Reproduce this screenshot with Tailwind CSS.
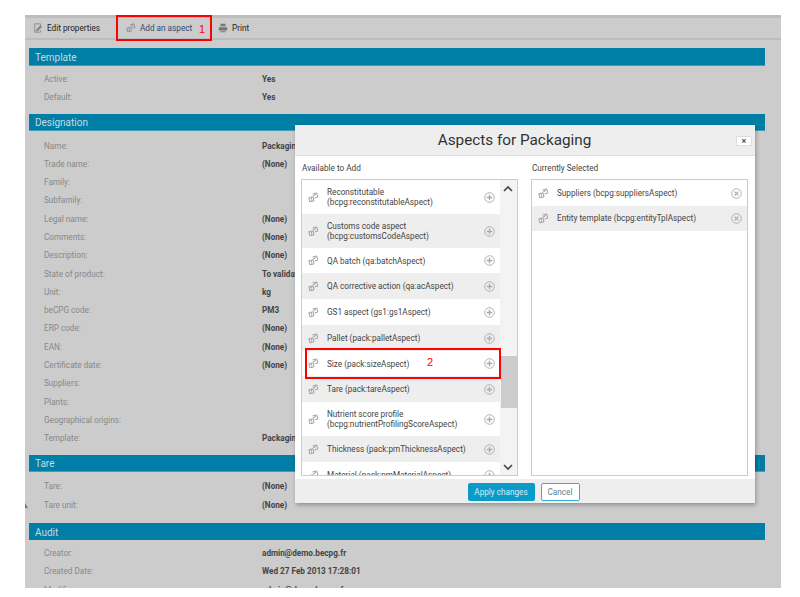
<!doctype html>
<html lang="en">
  <head>
    <meta charset="UTF-8" />
    <script src="https://cdn.jsdelivr.net/npm/@tailwindcss/browser@4"></script>
    <title>Aspects for Packaging</title>
  </head>
  <body class="bg-white font-['Roboto',sans-serif]">
    <svg class="hidden">
      <symbol id="aspect" viewBox="0 0 12 12" fill="none" stroke="currentColor" stroke-width="1">
        <path d="M1 6.200l4.500-1 1 4.500-4.500 1z" />
        <path d="M5 2.200l4.500-1.200 1.200 4.500-3.500 1" />
        <path d="M5.500 4.200l2-.5" />
        <path d="M3 7.200l1.200-.3M3.400 9l1.200-.3M7.200 3l1.300-.3" stroke-width="1.300" />
      </symbol>
      <symbol id="plus" viewBox="0 0 12 12" fill="none" stroke="currentColor">
        <circle cx="6" cy="6" r="5.200" stroke-width="1" />
        <path d="M6 3v6M3 6h6" stroke-width="1.500" />
      </symbol>
      <symbol id="cross" viewBox="0 0 12 12" fill="none" stroke="currentColor">
        <circle cx="6" cy="6" r="5.200" stroke-width="1" />
        <path d="M4 4l4 4M8 4l-4 4" stroke-width="1.400" />
      </symbol>
    </svg>

    <div class="h-[15px]"></div>
    <div class="relative ml-[25px] h-[573px] w-[756px] overflow-hidden bg-[#cccccc]">
      <!-- toolbar -->
      <div class="flex h-[25px] items-center border-t-[3px] border-b-2 border-[#bdbdbd] pt-px text-[8.2px] text-[#222222]">
        <span class="ml-[8px] flex w-[93px] items-center">
          <svg class="mr-[4px] h-[10px] w-[10px] text-[#888888]" viewBox="0 0 12 12" fill="none" stroke="currentColor"><path d="M2 1h7v3M2 1v10h7V9" /><path d="M4 8l5-5 1.500 1.500-5 5H4z" fill="currentColor" /></svg>
          Edit properties
        </span>
        <span class="flex w-[92px] items-center text-[#2f4a70]">
          <svg class="mr-[4px] h-[10px] w-[10px] text-[#888888]"><use href="#aspect" /></svg>
          Add an aspect
        </span>
        <span class="flex items-center">
          <svg class="mr-[4px] h-[10px] w-[10px] text-[#777777]" viewBox="0 0 12 12" fill="currentColor"><path d="M3 1h6v3H3zM1 5h10v4H1zM3 10h6v1H3z" /></svg>
          Print
        </span>
      </div>

      <!-- form -->
      <div class="mx-[4px] w-[736px] text-[8.2px]">
        <h2 class="mt-[8px] flex h-[18px] items-center border-b border-[#3f9fb8] bg-[#007ea6] pt-px pl-[6px] text-[10px] text-[#c9d9df]">Template</h2>
        <div class="mt-[4px] grid grid-cols-[218px_1fr] pl-[15px] leading-[18.4px]">
          <span class="text-[#888888]">Active:</span><b class="font-bold text-[#444444]">Yes</b>
          <span class="text-[#888888]">Default:</span><b class="font-bold text-[#444444]">Yes</b>
        </div>

        <h2 class="mt-[7.2px] flex h-[17px] items-center border-b border-[#3f9fb8] bg-[#007ea6] pt-px pl-[6px] text-[10px] text-[#c9d9df]">Designation</h2>
        <div class="mt-[5.5px] grid grid-cols-[218px_1fr] pl-[15px] leading-[18.3px]">
          <span class="text-[#888888]">Name:</span><b class="font-bold text-[#444444]">Packaging</b>
          <span class="text-[#888888]">Trade name:</span><b class="font-bold text-[#444444]">(None)</b>
          <span class="text-[#888888]">Family:</span><b></b>
          <span class="text-[#888888]">Subfamily:</span><b></b>
          <span class="text-[#888888]">Legal name:</span><b class="font-bold text-[#444444]">(None)</b>
          <span class="text-[#888888]">Comments:</span><b class="font-bold text-[#444444]">(None)</b>
          <span class="text-[#888888]">Description:</span><b class="font-bold text-[#444444]">(None)</b>
          <span class="text-[#888888]">State of product:</span><b class="font-bold text-[#444444]">To validate</b>
          <span class="text-[#888888]">Unit:</span><b class="font-bold text-[#444444]">kg</b>
          <span class="text-[#888888]">beCPG code:</span><b class="font-bold text-[#444444]">PM3</b>
          <span class="text-[#888888]">ERP code:</span><b class="font-bold text-[#444444]">(None)</b>
          <span class="text-[#888888]">EAN:</span><b class="font-bold text-[#444444]">(None)</b>
          <span class="text-[#888888]">Certificate date:</span><b class="font-bold text-[#444444]">(None)</b>
          <span class="text-[#888888]">Suppliers:</span><b></b>
          <span class="text-[#888888]">Plants:</span><b></b>
          <span class="text-[#888888]">Geographical origins:</span><b></b>
          <span class="text-[#888888]">Template:</span><b class="font-bold text-[#444444]">Packaging</b>
        </div>

        <h2 class="mt-[7.4px] flex h-[17px] items-center border-b border-[#3f9fb8] bg-[#007ea6] pt-px pl-[6px] text-[10px] text-[#c9d9df]">Tare</h2>
        <div class="mt-[5.3px] grid grid-cols-[218px_1fr] pl-[15px] leading-[18.4px]">
          <span class="text-[#888888]">Tare:</span><b class="font-bold text-[#444444]">(None)</b>
          <span class="text-[#888888]">Tare unit:</span><b class="font-bold text-[#444444]">(None)</b>
        </div>

        <h2 class="mt-[9px] flex h-[17px] items-center bg-[#007ea6] pt-px pl-[6px] text-[10px] text-[#c9d9df]">Audit</h2>
        <div class="mt-[3.8px] grid grid-cols-[218px_1fr] pl-[15px] leading-[18.4px]">
          <span class="text-[#888888]">Creator:</span><b class="font-bold text-[#444444]">admin@demo.becpg.fr</b>
          <span class="text-[#888888]">Created Date:</span><b class="font-bold text-[#444444]">Wed 27 Feb 2013 17:28:01</b>
          <span class="text-[#888888]">Modifier:</span><b class="font-bold text-[#444444]">admin@demo.becpg.fr</b>
        </div>
      </div>

      <!-- small grip on the panel edge -->
      <svg class="absolute top-[488px] left-0 h-[5px] w-[3px] text-[#777777]" viewBox="0 0 3 5" fill="currentColor"><path d="M0 5V0l3 5z" /></svg>
    </div>

    <!-- dialog -->
    <div class="absolute top-[125px] left-[295px] flex h-[378px] w-[460px] flex-col rounded-t-[3px] bg-white shadow-[1px_2px_4px_rgba(0,0,0,0.3)]">
      <div class="relative flex h-[31px] shrink-0 items-center justify-center border-b border-[#dddddd] bg-[#eeeeee] pt-px pr-[21px] text-[15.3px] text-[#333333]">
        Aspects for Packaging
        <span class="absolute top-[11px] right-[3px] flex h-[10px] w-[16px] items-center justify-center rounded-[1px] border border-[#dddddd] bg-white text-[9px] leading-none font-bold text-[#555555]">×</span>
      </div>
      <div class="flex h-[323px] shrink-0 px-[6px] pt-[6px]">
        <div class="w-[217px]">
          <p class="h-[17px] pl-px text-[8.2px] leading-[12px] text-[#444444]">Available to Add</p>
          <div class="relative h-[297px] overflow-hidden border border-[#cccccc] text-[8.2px] leading-[10px] text-[#444444]">
            <div class="w-[198px]">
              <div class="flex h-[34px] items-center bg-white pl-[6px]"><svg class="h-[11px] w-[11px] text-[#999999]"><use href="#aspect" /></svg><span class="ml-[8px] flex-1">Reconstitutable<br />(bcpg:reconstitutableAspect)</span><svg class="mr-[5px] h-[11px] w-[11px] text-[#aaaaaa]"><use href="#plus" /></svg></div>
              <div class="flex h-[34px] items-center bg-[#eeeeee] pl-[6px]"><svg class="h-[11px] w-[11px] text-[#999999]"><use href="#aspect" /></svg><span class="ml-[8px] flex-1">Customs code aspect<br />(bcpg:customsCodeAspect)</span><svg class="mr-[5px] h-[11px] w-[11px] text-[#aaaaaa]"><use href="#plus" /></svg></div>
              <div class="flex h-[25px] items-center bg-white pl-[6px]"><svg class="h-[11px] w-[11px] text-[#999999]"><use href="#aspect" /></svg><span class="ml-[8px] flex-1">QA batch (qa:batchAspect)</span><svg class="mr-[5px] h-[11px] w-[11px] text-[#aaaaaa]"><use href="#plus" /></svg></div>
              <div class="flex h-[26px] items-center bg-[#eeeeee] pl-[6px]"><svg class="h-[11px] w-[11px] text-[#999999]"><use href="#aspect" /></svg><span class="ml-[8px] flex-1">QA corrective action (qa:acAspect)</span><svg class="mr-[5px] h-[11px] w-[11px] text-[#aaaaaa]"><use href="#plus" /></svg></div>
              <div class="flex h-[26px] items-center bg-white pl-[6px]"><svg class="h-[11px] w-[11px] text-[#999999]"><use href="#aspect" /></svg><span class="ml-[8px] flex-1">GS1 aspect (gs1:gs1Aspect)</span><svg class="mr-[5px] h-[11px] w-[11px] text-[#aaaaaa]"><use href="#plus" /></svg></div>
              <div class="flex h-[26px] items-center bg-[#eeeeee] pl-[6px]"><svg class="h-[11px] w-[11px] text-[#999999]"><use href="#aspect" /></svg><span class="ml-[8px] flex-1">Pallet (pack:palletAspect)</span><svg class="mr-[5px] h-[11px] w-[11px] text-[#aaaaaa]"><use href="#plus" /></svg></div>
              <div class="flex h-[25px] items-center bg-white pl-[6px]"><svg class="h-[11px] w-[11px] text-[#999999]"><use href="#aspect" /></svg><span class="ml-[8px] flex-1">Size (pack:sizeAspect)</span><svg class="mr-[5px] h-[11px] w-[11px] text-[#aaaaaa]"><use href="#plus" /></svg></div>
              <div class="flex h-[26px] items-center bg-[#eeeeee] pl-[6px]"><svg class="h-[11px] w-[11px] text-[#999999]"><use href="#aspect" /></svg><span class="ml-[8px] flex-1">Tare (pack:tareAspect)</span><svg class="mr-[5px] h-[11px] w-[11px] text-[#aaaaaa]"><use href="#plus" /></svg></div>
              <div class="flex h-[34px] items-center bg-white pl-[6px]"><svg class="h-[11px] w-[11px] text-[#999999]"><use href="#aspect" /></svg><span class="ml-[8px] flex-1">Nutrient score profile<br />(bcpg:nutrientProfilingScoreAspect)</span><svg class="mr-[5px] h-[11px] w-[11px] text-[#aaaaaa]"><use href="#plus" /></svg></div>
              <div class="flex h-[26px] items-center bg-[#eeeeee] pl-[6px]"><svg class="h-[11px] w-[11px] text-[#999999]"><use href="#aspect" /></svg><span class="ml-[8px] flex-1">Thickness (pack:pmThicknessAspect)</span><svg class="mr-[5px] h-[11px] w-[11px] text-[#aaaaaa]"><use href="#plus" /></svg></div>
              <div class="flex h-[26px] items-center bg-white pl-[6px]"><svg class="h-[11px] w-[11px] text-[#999999]"><use href="#aspect" /></svg><span class="ml-[8px] flex-1">Material (pack:pmMaterialAspect)</span><svg class="mr-[5px] h-[11px] w-[11px] text-[#aaaaaa]"><use href="#plus" /></svg></div>
            </div>
            <!-- scrollbar -->
            <div class="absolute top-0 right-0 h-full w-[17px] bg-[#f3f3f3]">
              <div class="absolute top-[176px] left-px h-[52px] w-[16px] bg-[#cccccc]"></div>
              <svg class="absolute top-[5px] left-[3px] h-[8px] w-[10px] text-[#444444]" viewBox="0 0 10 8" fill="none" stroke="currentColor" stroke-width="1.600"><path d="M1 6l4-4 4 4" /></svg>
              <svg class="absolute top-[283px] left-[3px] h-[8px] w-[10px] text-[#444444]" viewBox="0 0 10 8" fill="none" stroke="currentColor" stroke-width="1.600"><path d="M1 2l4 4 4-4" /></svg>
            </div>
          </div>
        </div>
        <div class="ml-[13px] w-[217px]">
          <p class="h-[17px] pl-px text-[8.2px] leading-[12px] text-[#444444]">Currently Selected</p>
          <div class="h-[297px] border border-[#cccccc] text-[8.2px] text-[#444444]">
            <div class="flex h-[26px] items-center bg-white pl-[6px]"><svg class="h-[11px] w-[11px] text-[#999999]"><use href="#aspect" /></svg><span class="ml-[8px] flex-1">Suppliers (bcpg:suppliersAspect)</span><svg class="mr-[5px] h-[11px] w-[11px] text-[#aaaaaa]"><use href="#cross" /></svg></div>
            <div class="flex h-[25px] items-center bg-[#eeeeee] pl-[6px]"><svg class="h-[11px] w-[11px] text-[#999999]"><use href="#aspect" /></svg><span class="ml-[8px] flex-1">Entity template (bcpg:entityTplAspect)</span><svg class="mr-[5px] h-[11px] w-[11px] text-[#aaaaaa]"><use href="#cross" /></svg></div>
          </div>
        </div>
      </div>
      <div class="flex h-[24px] shrink-0 items-start justify-center gap-[6px] bg-[#eeeeee] pt-[4px] pr-[3px] text-[8.2px]">
        <span class="flex h-[18px] w-[67px] items-center justify-center rounded-[2px] bg-[#0a9bc9] text-[#d8eef5]">Apply changes</span>
        <span class="flex h-[18px] w-[39px] items-center justify-center rounded-[2px] border border-[#3aaed2] bg-white text-[#5d7f8c]">Cancel</span>
      </div>
    </div>

    <!-- callouts added on the screenshot -->
    <div class="absolute top-[15px] left-[116px] h-[26px] w-[96px] border-2 border-[#ff0000]">
      <span class="absolute top-[7px] left-[81px] font-['Liberation_Sans',sans-serif] text-[11px] leading-none text-[#ff0000]">1</span>
    </div>
    <div class="absolute top-[348px] left-[305px] h-[31px] w-[196px] border-2 border-[#ff0000]">
      <span class="absolute top-[7px] left-[120px] font-['Liberation_Sans',sans-serif] text-[11px] leading-none text-[#ff0000]">2</span>
    </div>
  </body>
</html>
